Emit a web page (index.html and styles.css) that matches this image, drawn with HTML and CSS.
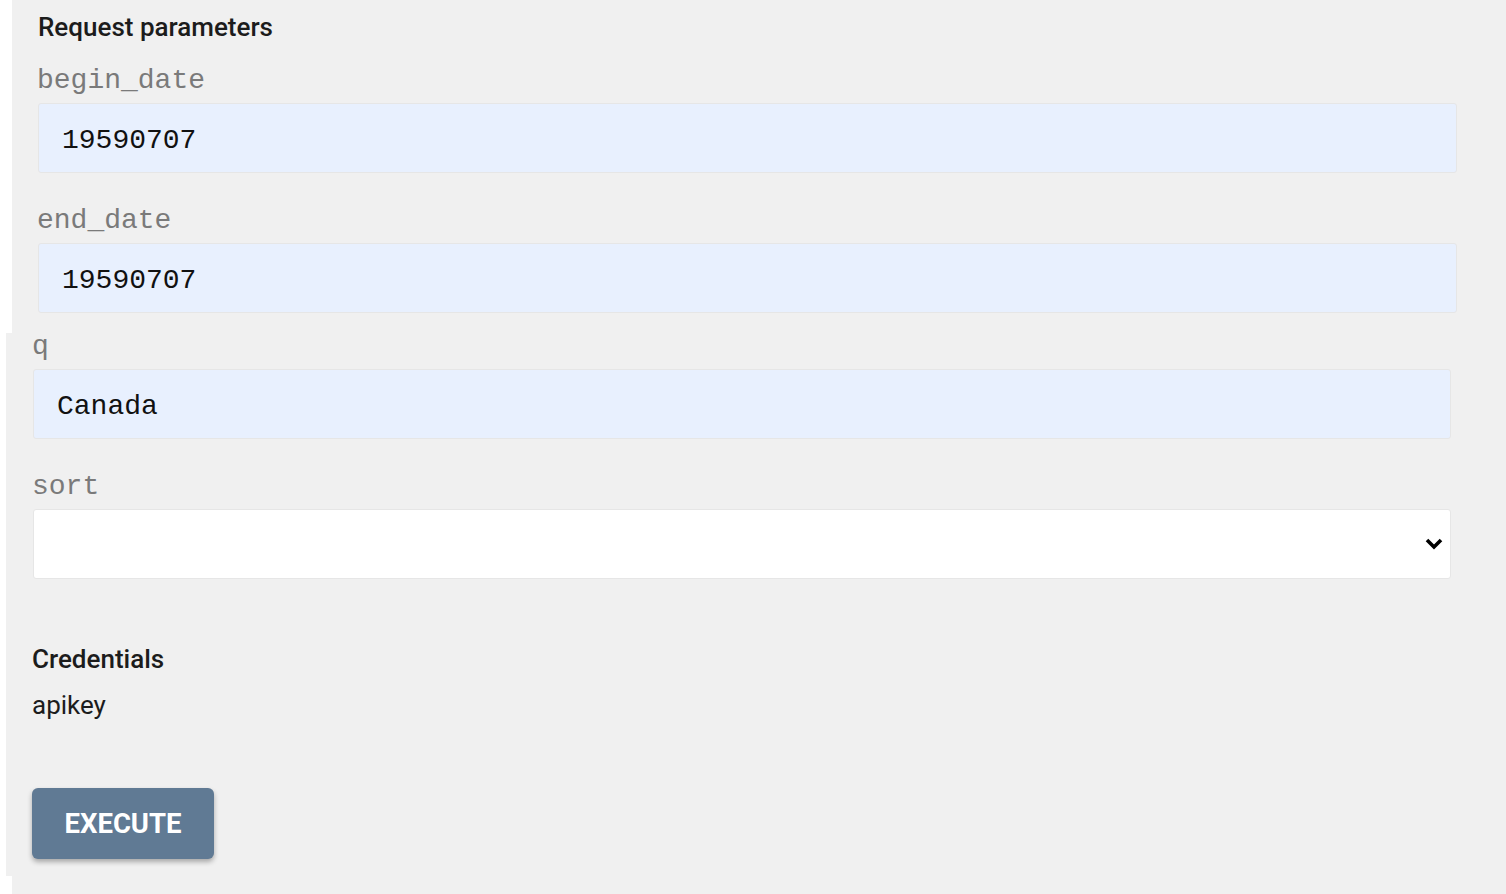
FILE: index.html
```html
<!DOCTYPE html>
<html>
<head>
<meta charset="utf-8">
<link rel="stylesheet" href="styles.css">
</head>
<body>
<div class="page">
  <section class="block block-top">
    <h2 class="heading">Request parameters</h2>
    <div class="field">
      <label class="label">begin_date</label>
      <div class="input">19590707</div>
    </div>
    <div class="field">
      <label class="label">end_date</label>
      <div class="input">19590707</div>
    </div>
  </section>
  <section class="block block-mid">
    <div class="field field-first">
      <label class="label">q</label>
      <div class="input">Canada</div>
    </div>
    <div class="field">
      <label class="label">sort</label>
      <div class="select">
        <svg class="chevron" width="18" height="12" viewBox="0 0 18 12"><path d="M2 2 L9 9 L16 2" fill="none" stroke="#000" stroke-width="3.6" stroke-linejoin="miter" stroke-linecap="butt"/></svg>
      </div>
    </div>
    <h2 class="heading heading-cred">Credentials</h2>
    <div class="cred">apikey</div>
    <button class="execute">EXECUTE</button>
  </section>
  <section class="block block-bottom"></section>
</div>
</body>
</html>
```
FILE: styles.css
```css
html, body {
  margin: 0;
  padding: 0;
  background: #ffffff;
}
.page {
  width: 1506px;
  height: 894px;
  overflow: hidden;
}
.block {
  background: #f0f0f0;
  box-sizing: border-box;
}
.block-top {
  margin-left: 12px;
  height: 333px;
  padding: 12px 49px 0 26px;
}
.block-mid {
  margin-left: 6px;
  height: 543px;
  padding: 0 55px 0 27px;
  display: flex;
  flex-direction: column;
  align-items: stretch;
}
.block-bottom {
  margin-left: 12px;
  height: 18px;
}
.heading {
  margin: 0;
  font-family: Roboto, "Liberation Sans", sans-serif;
  font-weight: 500;
  font-size: 26px;
  line-height: 30px;
  color: #1c1c1c;
}
.field {
  margin-top: 23px;
  display: flex;
  flex-direction: column;
}
.block-top .field + .field {
  margin-top: 32px;
}
.block-mid .field-first {
  margin-top: -2px;
}
.block-mid .field + .field {
  margin-top: 32px;
}
.label {
  font-family: "Liberation Mono", "DejaVu Sans Mono", monospace;
  font-size: 28px;
  line-height: 32px;
  color: #7a7a7a;
  margin-bottom: 6px;
  margin-left: -1px;
}
.input, .select {
  box-sizing: border-box;
  height: 70px;
  border: 1px solid #e6e6e6;
  border-radius: 3px;
  display: flex;
  align-items: center;
}
.input {
  background: #e8f0fe;
  padding-left: 23px;
  padding-top: 4px;
  font-family: "Liberation Mono", "DejaVu Sans Mono", monospace;
  font-size: 28px;
  color: #111;
}
.select {
  background: #ffffff;
  justify-content: flex-end;
  padding-right: 7px;
}
.chevron {
  display: block;
}
.heading-cred {
  margin-top: 65px;
  margin-left: -1px;
}
.cred {
  margin-top: 16px;
  margin-left: -1px;
  font-family: Roboto, "Liberation Sans", sans-serif;
  font-size: 26px;
  line-height: 30px;
  color: #1c1c1c;
}
.execute {
  align-self: flex-start;
  margin-top: 68px;
  margin-left: -1px;
  width: 182px;
  height: 71px;
  border: none;
  border-radius: 6px;
  background: #607a94;
  color: #ffffff;
  font-family: Roboto, "Liberation Sans", sans-serif;
  font-weight: 700;
  font-size: 27.5px;
  box-shadow: 0 3px 5px rgba(0, 0, 0, 0.3);
  padding: 0;
  cursor: pointer;
}
```
